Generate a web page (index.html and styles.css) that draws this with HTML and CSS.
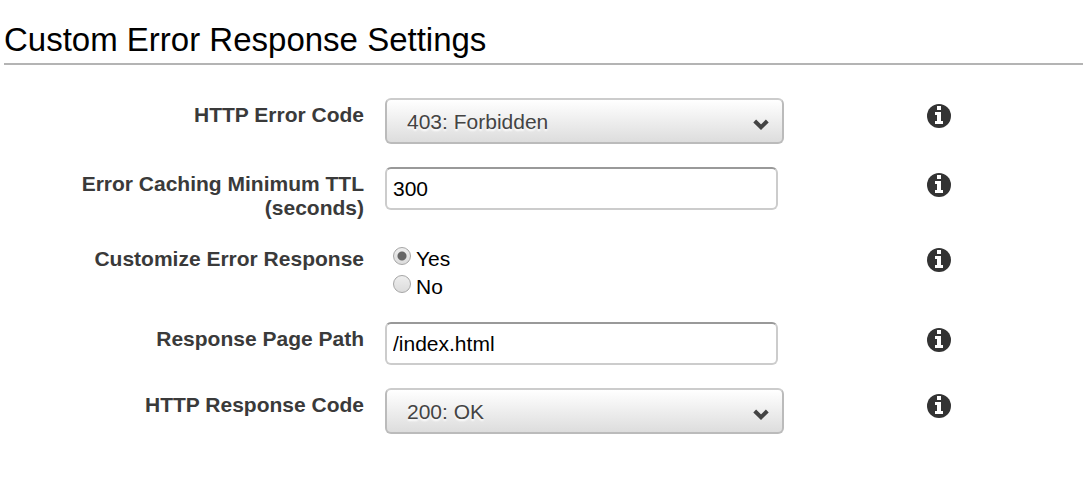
FILE: index.html
```html
<!DOCTYPE html>
<html lang="en">
<head>
<meta charset="utf-8">
<meta name="viewport" content="width=device-width, initial-scale=1">
<title>Custom Error Response Settings</title>
<link rel="stylesheet" href="styles.css">
</head>
<body>
<svg class="sprite" aria-hidden="true">
  <symbol id="info" viewBox="0 0 24 24"><circle cx="12" cy="12" r="12"/><path fill="#fff" d="M10 2h4v4h-4zM8 8h6v9h2v3H8v-3h2v-6H8z"/></symbol>
  <symbol id="chevron" viewBox="0 0 16 11"><path d="M1.7 2 8 8.2 14.3 2" fill="none" stroke="#444" stroke-width="4"/></symbol>
</svg>
<main class="settings">
  <h1 class="title">Custom Error Response Settings</h1>
  <form class="form">
    <div class="row">
      <label class="label" for="error-code">HTTP Error Code</label>
      <div class="select">
        <select class="select-box" id="error-code"><option>403: Forbidden</option></select>
        <svg class="chevron" aria-hidden="true"><use href="#chevron"/></svg>
      </div>
      <button class="info" type="button" aria-label="About HTTP Error Code"><svg class="info-icon"><use href="#info"/></svg></button>
    </div>
    <div class="row">
      <label class="label" for="ttl">Error Caching Minimum TTL (seconds)</label>
      <input class="text-box" id="ttl" type="text" value="300">
      <button class="info" type="button" aria-label="About Error Caching Minimum TTL"><svg class="info-icon"><use href="#info"/></svg></button>
    </div>
    <div class="row" role="radiogroup" aria-labelledby="customize">
      <span class="label" id="customize">Customize Error Response</span>
      <div class="options">
        <label class="option"><input class="radio" type="radio" name="customize" checked><span>Yes</span></label>
        <label class="option"><input class="radio" type="radio" name="customize"><span>No</span></label>
      </div>
      <button class="info" type="button" aria-label="About Customize Error Response"><svg class="info-icon"><use href="#info"/></svg></button>
    </div>
    <div class="row">
      <label class="label" for="path">Response Page Path</label>
      <input class="text-box" id="path" type="text" value="/index.html">
      <button class="info" type="button" aria-label="About Response Page Path"><svg class="info-icon"><use href="#info"/></svg></button>
    </div>
    <div class="row">
      <label class="label" for="response-code">HTTP Response Code</label>
      <div class="select">
        <select class="select-box" id="response-code"><option>200: OK</option></select>
        <svg class="chevron" aria-hidden="true"><use href="#chevron"/></svg>
      </div>
      <button class="info" type="button" aria-label="About HTTP Response Code"><svg class="info-icon"><use href="#info"/></svg></button>
    </div>
  </form>
</main>
</body>
</html>
```
FILE: styles.css
```css
* {
  box-sizing: border-box;
}

body {
  margin: 0;
  background: #fff;
  color: #000;
  font: 21px/24px "Liberation Sans", Arial, sans-serif;
}

.sprite {
  position: absolute;
  width: 0;
  height: 0;
}

.settings {
  padding: 20px 0 40px 4px;
}

.title {
  margin: 0;
  padding-bottom: 3px;
  border-bottom: 2px solid #b4b4b4;
  font-size: 33px;
  font-weight: 400;
  line-height: 40px;
}

.form {
  display: grid;
  gap: 23px;
  padding-top: 33px;
}

.row {
  display: grid;
  grid-template-columns: 360fr 521fr 156fr;
  column-gap: 21px;
  align-items: start;
}

.label {
  margin-bottom: -1px;
  padding-top: 5px;
  color: #3a3a3a;
  font-weight: 700;
  text-align: right;
}

.select {
  position: relative;
  max-width: 399px;
}

.select-box {
  display: block;
  width: 100%;
  height: 46px;
  padding: 2px 40px 0 20px;
  border: 2px solid #bbb;
  border-top-color: #ccc;
  border-radius: 6px;
  appearance: none;
  background: linear-gradient(#fff, #ddd);
  color: #444;
  font: inherit;
  text-shadow: 0 2px 2px #fff;
}

.chevron {
  position: absolute;
  top: 21px;
  right: 15px;
  width: 16px;
  height: 11px;
  pointer-events: none;
}

.text-box {
  width: 100%;
  max-width: 393px;
  height: 43px;
  padding: 0 6px;
  border: 2px solid #ccc;
  border-top-color: #999;
  border-radius: 6px;
  background: #fff;
  color: #000;
  font: inherit;
}

.options {
  display: grid;
  justify-items: start;
  margin-bottom: -2px;
  padding: 3px 0 0 8px;
}

.option {
  display: flex;
  align-items: flex-start;
  gap: 5px;
  line-height: 28px;
}

.radio {
  width: 18px;
  height: 18px;
  margin: 2px 0 0;
  border: 1px solid #a5a5a5;
  border-radius: 50%;
  appearance: none;
  background: linear-gradient(#eee, #dcdcdc);
}

.radio:checked {
  background: radial-gradient(circle, #666 4px, transparent 5px), linear-gradient(#eee, #dcdcdc);
}

.info {
  width: 24px;
  margin: 6px 0 0;
  padding: 0;
  border: 0;
  background: none;
}

.info-icon {
  display: block;
  width: 24px;
  height: 24px;
  fill: #333;
}
```
